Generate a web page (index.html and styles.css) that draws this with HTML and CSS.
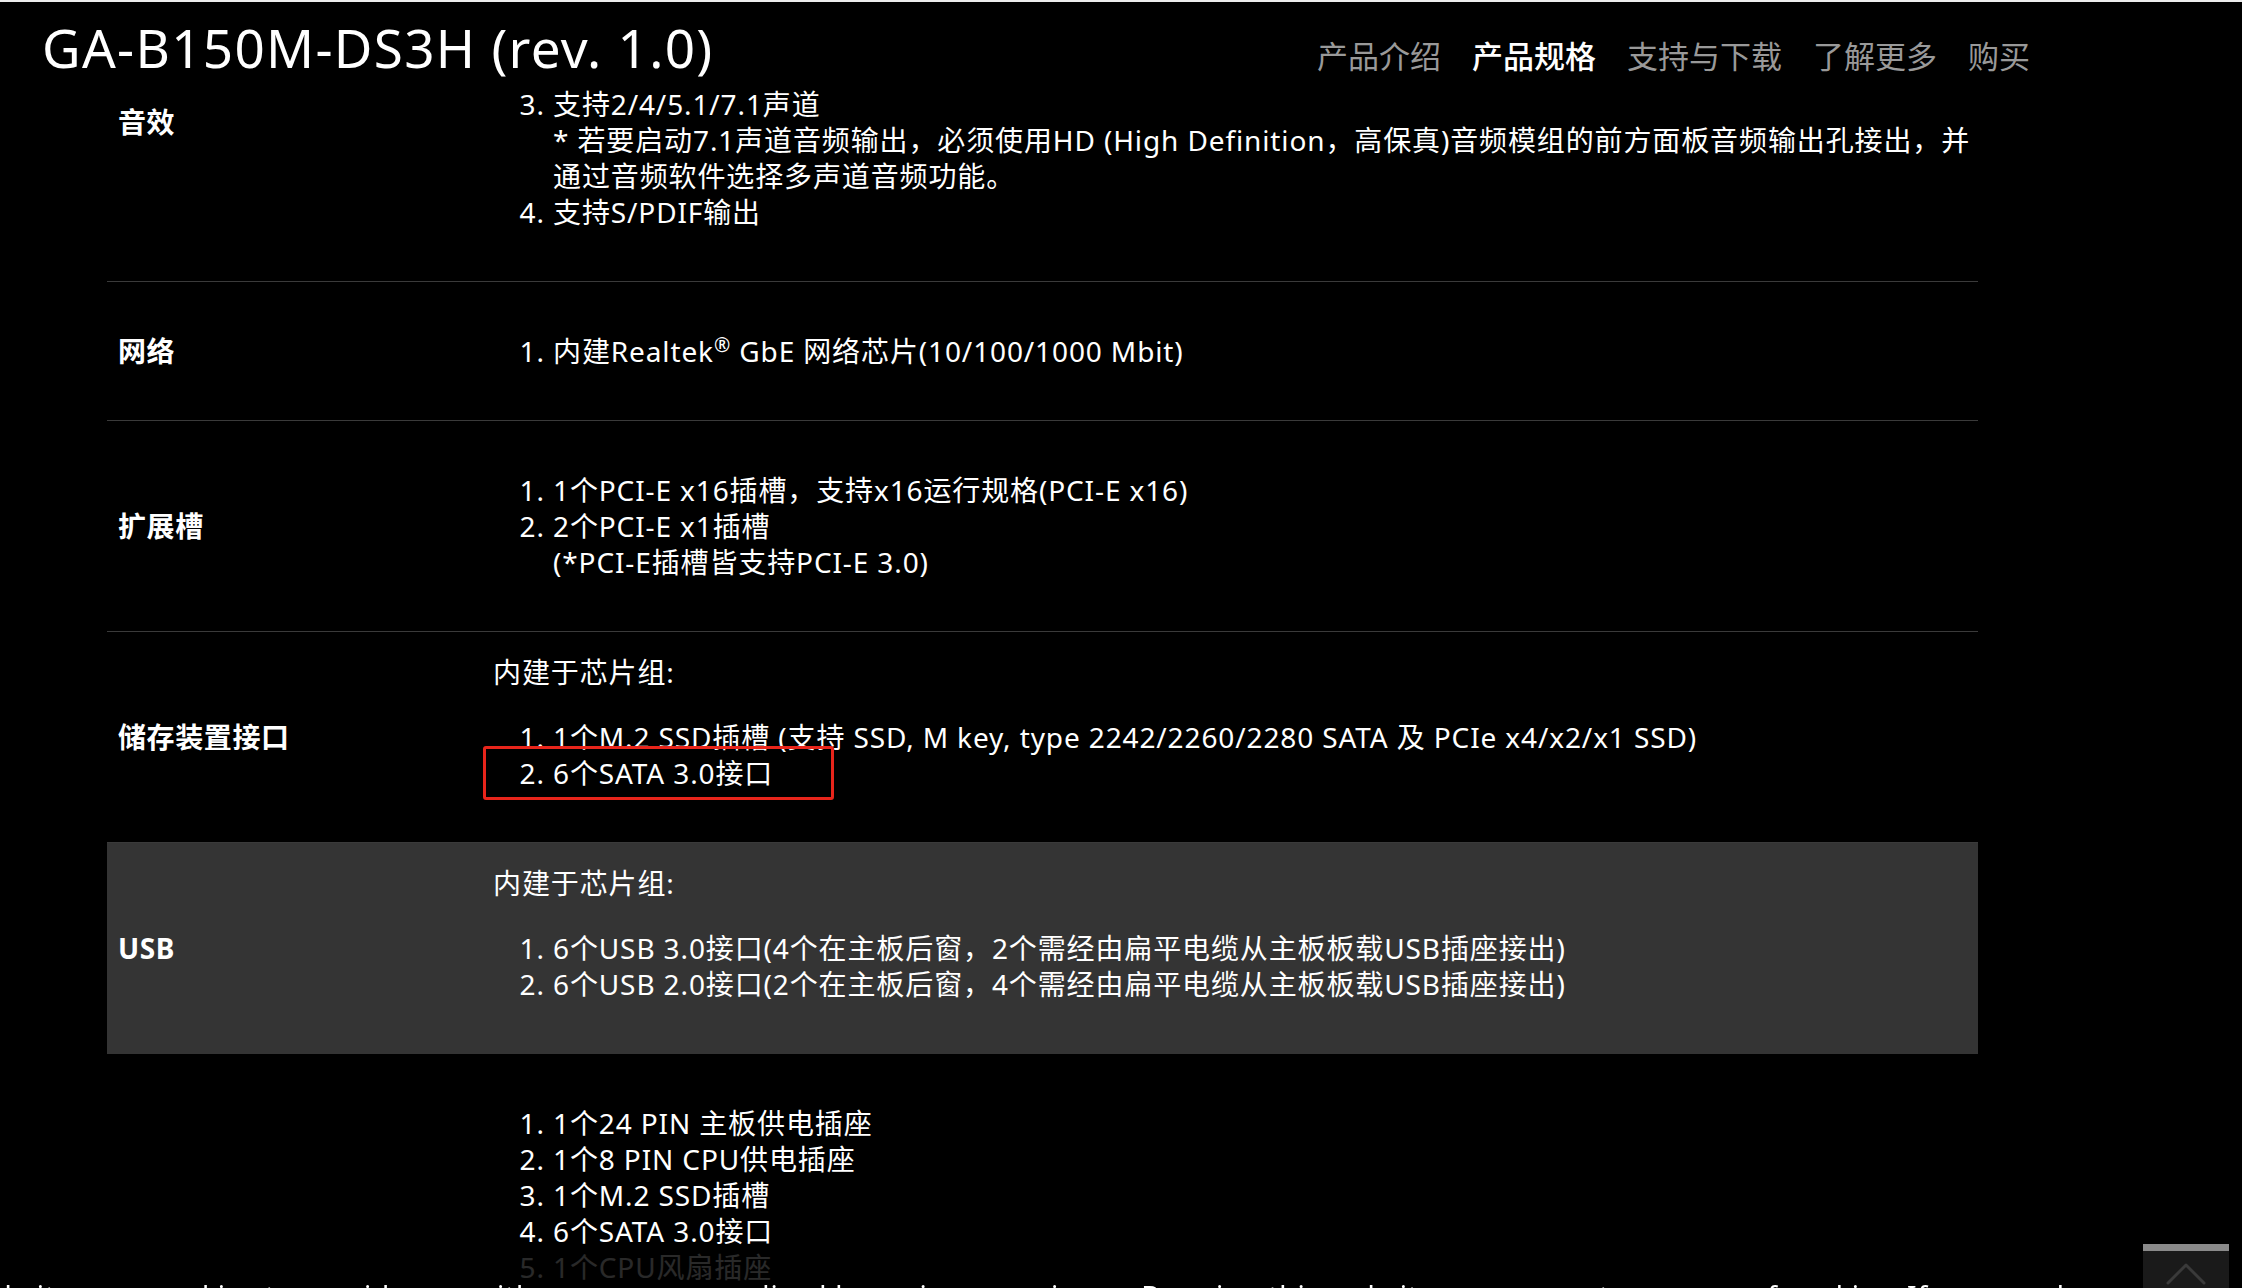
FILE: index.html
```html
<!DOCTYPE html>
<html lang="zh-CN">
<head>
<meta charset="utf-8">
<title>GA-B150M-DS3H (rev. 1.0) 产品规格</title>
<link rel="stylesheet" href="styles.css">
</head>
<body>
<div class="topstrip"></div>
<header class="header">
  <h1 class="title">GA-B150M-DS3H (rev. 1.0)</h1>
  <nav class="nav">
    <a class="nav-item">产品介绍</a>
    <a class="nav-item active">产品规格</a>
    <a class="nav-item">支持与下载</a>
    <a class="nav-item">了解更多</a>
    <a class="nav-item">购买</a>
  </nav>
</header>

<main class="specs">
  <div class="row">
    <div class="label">音效</div>
    <div class="value">
      <ol class="list">
        <li>Realtek® ALC887 音频芯片</li>
        <li>支持High Definition Audio</li>
        <li>支持2/4/5.1/7.1声道<br>* 若要启动7.1声道音频输出，必须使用HD (High Definition，高保真)音频模组的前方面板音频输出孔接出，并<br>通过音频软件选择多声道音频功能。</li>
        <li>支持S/PDIF输出</li>
      </ol>
    </div>
  </div>

  <div class="row">
    <div class="label">网络</div>
    <div class="value">
      <ol class="list">
        <li>内建Realtek<sup class="reg">®</sup> GbE 网络芯片(10/100/1000 Mbit)</li>
      </ol>
    </div>
  </div>

  <div class="row">
    <div class="label">扩展槽</div>
    <div class="value">
      <ol class="list">
        <li>1个PCI-E x16插槽，支持x16运行规格(PCI-E x16)</li>
        <li>2个PCI-E x1插槽<br>(*PCI-E插槽皆支持PCI-E 3.0)</li>
      </ol>
    </div>
  </div>

  <div class="row">
    <div class="label">储存装置接口</div>
    <div class="value">
      <p class="intro">内建于芯片组:</p>
      <ol class="list">
        <li>1个M.2 SSD插槽 (支持 SSD, M key, type 2242/2260/2280 SATA 及 PCIe x4/x2/x1 SSD)</li>
        <li class="marked">6个SATA 3.0接口<span class="highlight"></span></li>
      </ol>
    </div>
  </div>

  <div class="row row-alt">
    <div class="label">USB</div>
    <div class="value">
      <p class="intro">内建于芯片组:</p>
      <ol class="list">
        <li>6个USB 3.0接口(4个在主板后窗，2个需经由扁平电缆从主板板载USB插座接出)</li>
        <li>6个USB 2.0接口(2个在主板后窗，4个需经由扁平电缆从主板板载USB插座接出)</li>
      </ol>
    </div>
  </div>

  <div class="row">
    <div class="label">内建接口</div>
    <div class="value">
      <ol class="list">
        <li>1个24 PIN 主板供电插座</li>
        <li>1个8 PIN CPU供电插座</li>
        <li>1个M.2 SSD插槽</li>
        <li>6个SATA 3.0接口</li>
        <li>1个CPU风扇插座</li>
        <li>1个系统风扇插座</li>
        <li>1个前端控制面板插座</li>
        <li>1个前端音源插座</li>
        <li>1个S/PDIF输出插座</li>
        <li>1个USB 3.0/2.0插座</li>
        <li>2个USB 2.0/1.1插座</li>
        <li>1个串行埠插座</li>
        <li>1个并行埠插座</li>
        <li>1个清除CMOS数据插座</li>
      </ol>
    </div>
  </div>
</main>

<div class="cookie">
  <p class="cookie-text">This website uses cookies to provide you with a more personalized browsing experience. By using this website, you agree to our use of cookies. If you need more information</p>
</div>

<a class="totop" aria-label="回到顶部">
  <span class="totop-bar"></span>
  <svg class="totop-icon" width="40" height="22" viewBox="0 0 40 22"><polyline points="2,20 20,2 38,20" fill="none" stroke="#3a3a3a" stroke-width="3" stroke-linecap="round" stroke-linejoin="round"/></svg>
</a>
</body>
</html>
```

FILE: styles.css
```css
html, body {
  margin: 0;
  padding: 0;
  background: #000;
  color: #fff;
  font-family: "Noto Sans", "Noto Sans CJK SC", sans-serif;
  overflow: hidden;
}

.topstrip {
  position: fixed;
  top: 0;
  left: 0;
  right: 0;
  height: 2px;
  background: #ececec;
  z-index: 20;
}

.header {
  position: fixed;
  top: 0;
  left: 0;
  right: 0;
  height: 86px;
  background: #000;
  z-index: 10;
  display: flex;
  align-items: center;
  justify-content: space-between;
  padding: 0 212px 0 42px;
}

.title {
  margin: 0;
  font-size: 53px;
  font-weight: 400;
  line-height: 1;
  letter-spacing: 1.3px;
  padding-top: 8px;
}

.nav {
  display: flex;
  gap: 31px;
  padding-top: 26px;
}

.nav-item {
  font-size: 31px;
  line-height: 1;
  color: #999;
}

.nav-item.active {
  color: #fff;
  font-weight: 500;
}

.specs {
  margin: -37px 0 0 107px;
  width: 1871px;
}

.row {
  display: flex;
  align-items: center;
  border-bottom: 1px solid #3a3a3a;
  padding: 22px 0 22px 11px;
}

.row-alt {
  background: #343434;
  border-bottom-color: #343434;
}

.label {
  width: 375px;
  flex: none;
  font-size: 28px;
  font-weight: 700;
  line-height: 36px;
  letter-spacing: 0.6px;
}

.value {
  flex: 1;
  font-size: 28px;
  line-height: 36px;
  letter-spacing: 0.88px;
}

.intro {
  margin: 0;
}

.list {
  margin: 29px 0;
  padding-left: 60px;
}

.reg {
  font-size: 0.7em;
  line-height: 0;
}

.marked {
  position: relative;
}

.highlight {
  position: absolute;
  left: -70px;
  top: -9px;
  width: 345px;
  height: 48px;
  border: 3px solid #e8251b;
  border-radius: 3px;
}

.cookie {
  position: fixed;
  left: 0;
  right: 0;
  top: 1250px;
  height: 120px;
  background: rgba(0, 0, 0, 0.84);
  z-index: 5;
}

.cookie-text {
  margin: 27px 0 0 -100px;
  font-size: 28px;
  line-height: 36px;
  letter-spacing: 0.85px;
  white-space: nowrap;
  color: #fff;
}

.totop {
  position: fixed;
  right: 13px;
  top: 1244px;
  width: 86px;
  height: 70px;
  background: #1a1a1a;
  z-index: 15;
  display: flex;
  flex-direction: column;
  align-items: center;
}

.totop-bar {
  align-self: stretch;
  height: 7px;
  background: #8a8a8a;
}

.totop-icon {
  margin-top: 12px;
}
```
